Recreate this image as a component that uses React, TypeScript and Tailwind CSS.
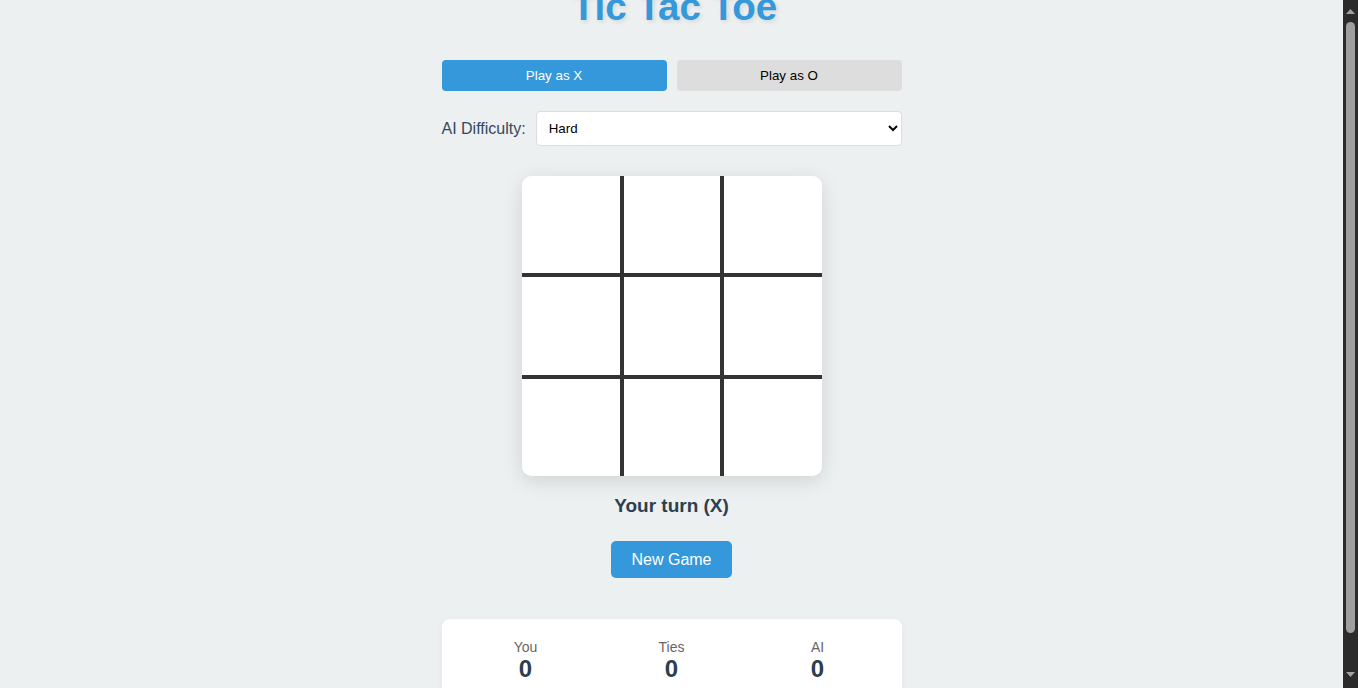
import React from "react";

const cells = [0, 1, 2, 3, 4, 5, 6, 7, 8];

const cellBorder = (i: number) => {
  const col = i % 3;
  const row = Math.floor(i / 3);
  const c = col === 0 ? "border-r-2" : col === 1 ? "border-x-2" : "border-l-2";
  const r = row === 0 ? "border-b-2" : row === 1 ? "border-y-2" : "border-t-2";
  return `${c} ${r}`;
};

const Board = () => {
  return (
    <div className="grid grid-cols-3 w-[300px] h-[300px] bg-white rounded-[10px] overflow-hidden shadow-[0_5px_20px_rgba(0,0,0,0.12)]">
      {cells.map((i) => (
        <div key={i} className={`${cellBorder(i)} border-[#333] bg-white`} />
      ))}
    </div>
  );
};

const Stat = ({ label, value }: { label: string; value: number }) => {
  return (
    <div className="flex flex-col items-center">
      <div className="text-[14px] leading-[16px] text-[#666]">{label}</div>
      <div className="text-[24px] leading-[28px] font-bold text-[#2c3e50]">{value}</div>
    </div>
  );
};

// the browser's dark scrollbar, as it shows in the shot
const ScrollBar = () => {
  return (
    <div className="w-[15px] shrink-0 h-full bg-[#2b2b2b] flex flex-col items-center">
      <div className="h-[15px] pt-[9px]">
        <svg width="9" height="5" viewBox="0 0 9 5">
          <polygon points="4.5,0 9,5 0,5" fill="#a3a3a3" />
        </svg>
      </div>
      <div className="mt-[7px] w-[9px] h-[611px] rounded-full bg-[#9f9f9f]" />
      <div className="flex-1" />
      <div className="h-[16px]">
        <svg width="9" height="5" viewBox="0 0 9 5">
          <polygon points="0,0 9,0 4.5,5" fill="#a3a3a3" />
        </svg>
      </div>
    </div>
  );
};

export default function App() {
  return (
    <div className="h-[688px] overflow-hidden flex bg-[#ecf0f1] font-['Liberation_Sans',Arial,sans-serif]">
      <div className="flex-1 flex flex-col items-center">
        <div className="w-[460px] flex flex-col items-center">
          <h1 className="mt-[-14px] mb-[32px] ml-[6px] text-[38.5px] leading-[42px] font-bold text-[#3498db] [text-shadow:2px_2px_4px_rgba(0,0,0,0.1)]">
            Tic Tac Toe
          </h1>

          <div className="flex w-full gap-[10px]">
            <button className="flex-1 h-[31px] rounded bg-[#3498db] text-white text-[13.33px]">
              Play as X
            </button>
            <button className="flex-1 h-[31px] rounded bg-[#ddd] text-black text-[13.33px]">
              Play as O
            </button>
          </div>

          <div className="flex w-full items-center gap-[10px] mt-5">
            <label className="text-[16px] text-[#34495e] whitespace-nowrap">AI Difficulty:</label>
            <select
              defaultValue="hard"
              className="flex-1 h-[35px] px-2 rounded border border-[#ddd] bg-white text-[13.33px] text-black"
            >
              <option value="easy">Easy</option>
              <option value="medium">Medium</option>
              <option value="hard">Hard</option>
            </select>
          </div>

          <div className="mt-[30px]">
            <Board />
          </div>

          <div className="mt-[19px] text-[19px] leading-[22px] font-bold text-[#2c3e50]">
            Your turn (X)
          </div>

          <button className="mt-[24px] h-[37px] px-5 rounded-[5px] bg-[#3498db] text-white text-[16px]">
            New Game
          </button>

          <div className="mt-[41px] w-full bg-white rounded-lg shadow-[0_2px_6px_rgba(0,0,0,0.05)] pt-5 pb-5 px-[11px] grid grid-cols-3">
            <Stat label="You" value={0} />
            <Stat label="Ties" value={0} />
            <Stat label="AI" value={0} />
          </div>
        </div>
      </div>
      <ScrollBar />
    </div>
  );
}
